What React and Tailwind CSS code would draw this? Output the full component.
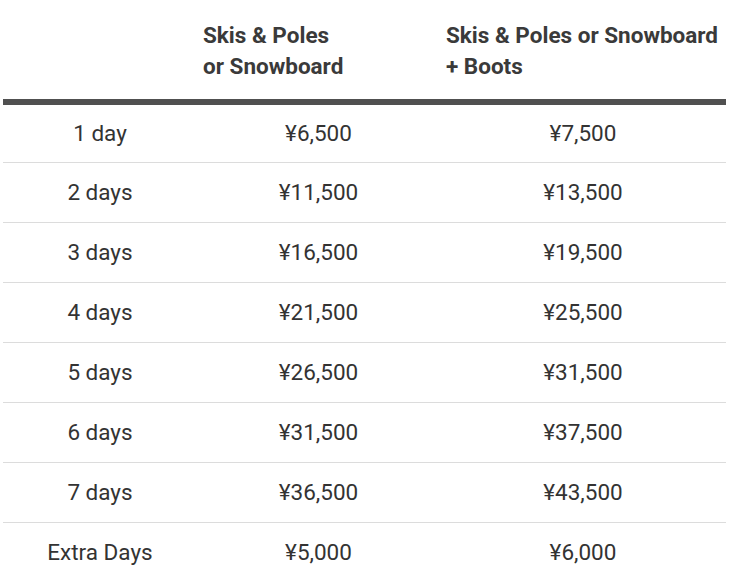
import React from 'react';

const rows = [
  ['1 day', '¥6,500', '¥7,500'],
  ['2 days', '¥11,500', '¥13,500'],
  ['3 days', '¥16,500', '¥19,500'],
  ['4 days', '¥21,500', '¥25,500'],
  ['5 days', '¥26,500', '¥31,500'],
  ['6 days', '¥31,500', '¥37,500'],
  ['7 days', '¥36,500', '¥43,500'],
  ['Extra Days', '¥5,000', '¥6,000'],
];

const App = () => {
  return (
    <div className="min-h-screen bg-white text-[#333] font-['Roboto',sans-serif]">
      <div className="ml-[3px] w-[723px]">
        {/* header */}
        <div className="grid grid-cols-[194px_243px_286px] h-[99px] items-center font-bold text-[22.5px] leading-[31px] text-[#3a3a3a]">
          <div />
          <div className="pl-[6px] pt-[2px]">
            Skis &amp; Poles
            <br />
            or Snowboard
          </div>
          <div className="pl-[6px] pt-[2px] whitespace-nowrap">
            Skis &amp; Poles or Snowboard
            <br />
            + Boots
          </div>
        </div>
        <div className="h-[6px] bg-[#505050]" />

        {/* body */}
        {rows.map(([label, a, b], i) => (
          <div
            key={label}
            className={
              'grid grid-cols-[194px_243px_286px] items-center text-center text-[22.5px] pt-[1px] ' +
              (i === 0 ? 'h-[57px]' : 'h-[60px] border-t-[1.5px] border-[#dcdcdc]')
            }
          >
            <div>{label}</div>
            <div>{a}</div>
            <div>{b}</div>
          </div>
        ))}
      </div>
    </div>
  );
};

export default App;
